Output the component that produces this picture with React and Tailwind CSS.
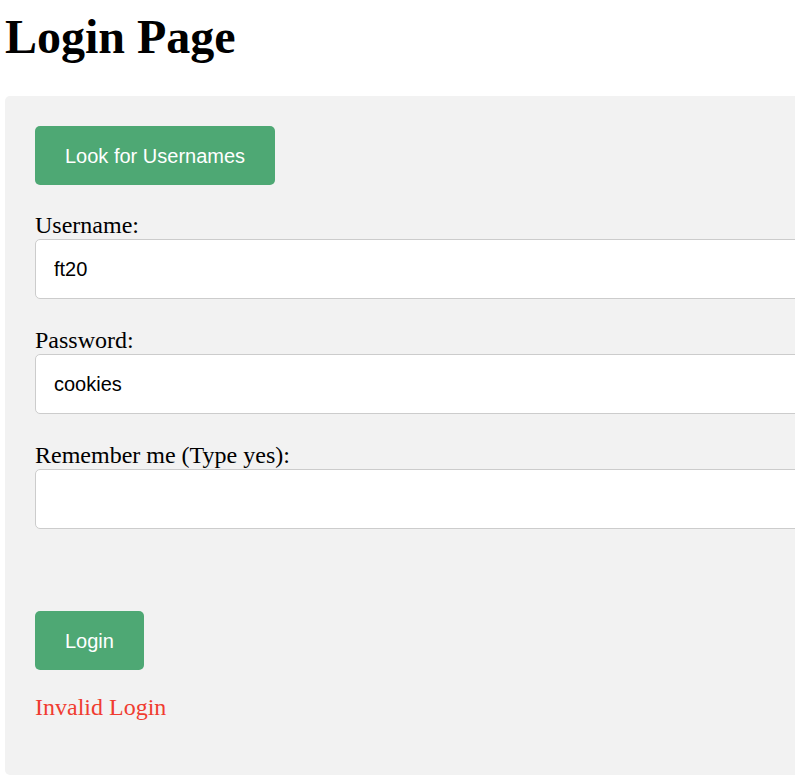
import React, { useState } from 'react';

const App = () => {
  const [form, setForm] = useState({ username: 'ft20', password: 'cookies', remember: '' });

  const handleChange = (e) => {
    setForm({ ...form, [e.target.name]: e.target.value });
  };

  const inputClass =
    "block w-full h-[60px] px-[18px] bg-white border border-[#cccccc] rounded-[5px] text-[20px] text-black font-['Liberation_Sans',Arial,sans-serif] outline-none";

  return (
    <div className="min-h-screen overflow-hidden bg-white p-[5px] font-['Liberation_Serif','Times_New_Roman',serif] text-black">
      <h1 className="mt-[4px] mb-[32px] text-[48px] leading-[55px] font-bold">Login Page</h1>

      {/* panel runs past the right edge */}
      <div className="w-[calc(100%+60px)] bg-[#f2f2f2] rounded-[5px] pt-[30px] pb-[54px] px-[30px]">
        <button className="h-[59px] px-[30px] bg-[#4ea874] text-white rounded-[5px] text-[20px] font-['Liberation_Sans',Arial,sans-serif]">
          Look for Usernames
        </button>

        <div className="mt-[26px]">
          <label className="block text-[24px] leading-[28px]">Username:</label>
          <input name="username" value={form.username} onChange={handleChange} className={inputClass} />
        </div>

        <div className="mt-[27px]">
          <label className="block text-[24px] leading-[28px]">Password:</label>
          <input name="password" value={form.password} onChange={handleChange} className={inputClass} />
        </div>

        <div className="mt-[27px]">
          <label className="block text-[24px] leading-[28px]">Remember me (Type yes):</label>
          <input name="remember" value={form.remember} onChange={handleChange} className={inputClass} />
        </div>

        <button className="mt-[82px] block h-[59px] px-[30px] bg-[#4ea874] text-white rounded-[5px] text-[20px] font-['Liberation_Sans',Arial,sans-serif]">
          Login
        </button>

        <p className="mt-[23px] text-[24px] leading-[28px] text-[#f03c30]">Invalid Login</p>
      </div>
    </div>
  );
};

export default App;
